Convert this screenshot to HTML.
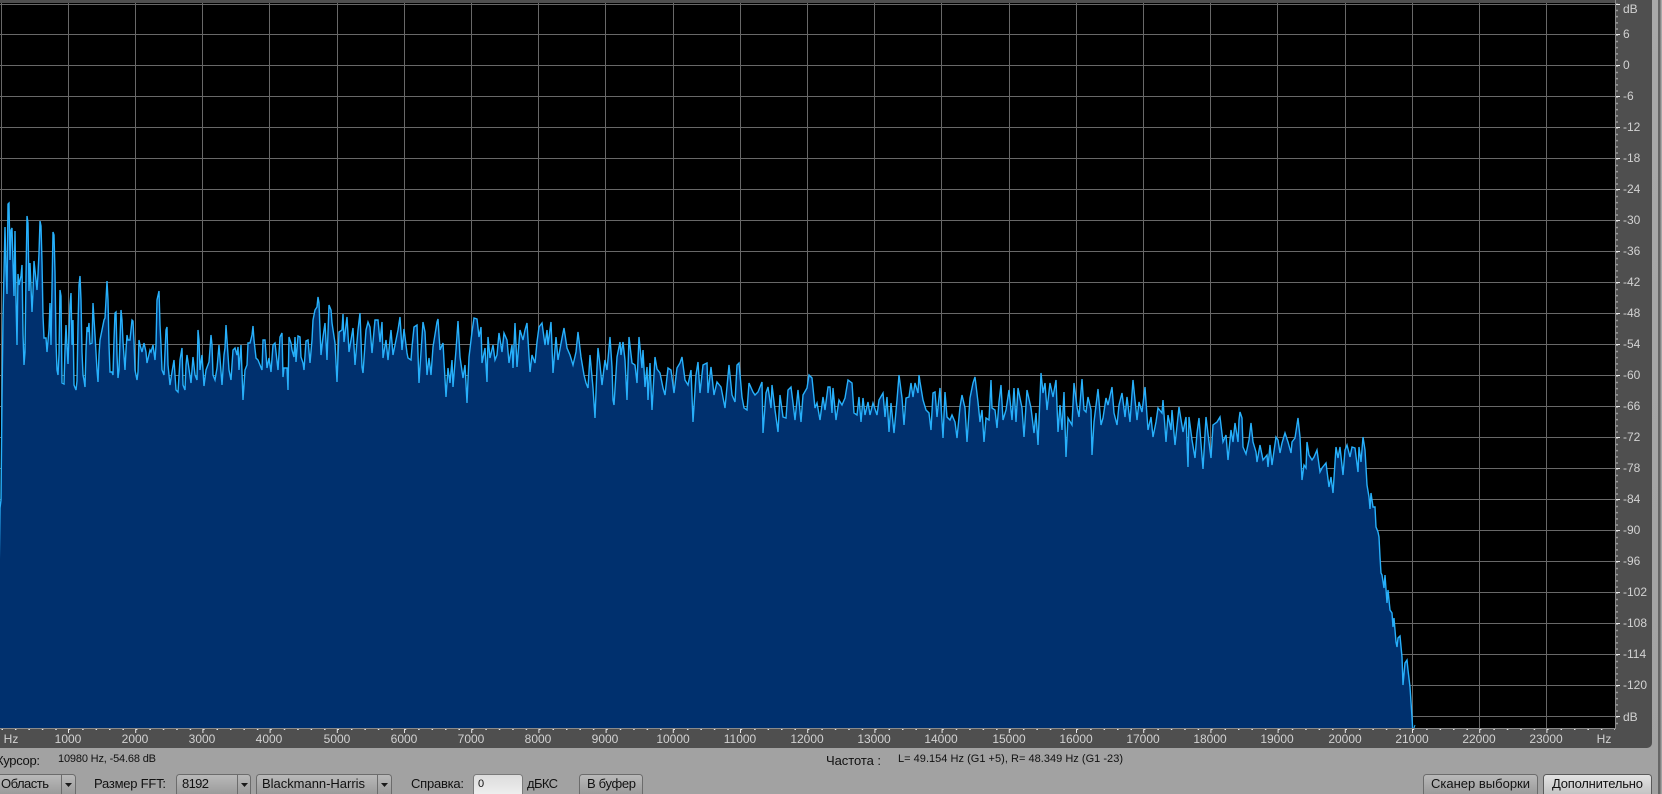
<!DOCTYPE html>
<html lang="ru">
<head>
<meta charset="utf-8">
<title>Спектр</title>
<style>
html,body{margin:0;padding:0;background:#a6a6a6;width:1662px;height:794px;overflow:hidden}
svg{display:block;position:absolute;left:0;top:0}
text{font-family:"Liberation Sans","DejaVu Sans",sans-serif}
.r{fill:#d2d2d2;font-size:12px}
.l{fill:#111;font-size:13px}
.s{fill:#111;font-size:11px}
.b{fill:url(#btn);stroke:#6c6c6c}
.sep{stroke:#6c6c6c}
.arr{fill:#1a1a1a}
</style>
</head>
<body>
<svg width="1662" height="794" viewBox="0 0 1662 794" xmlns="http://www.w3.org/2000/svg">
<defs>
<linearGradient id="bg" x1="0" y1="0" x2="0" y2="1"><stop offset="0" stop-color="#a9a9a9"/><stop offset="1" stop-color="#a2a2a2"/></linearGradient>
<linearGradient id="btn" x1="0" y1="0" x2="0" y2="1"><stop offset="0" stop-color="#bababa"/><stop offset="1" stop-color="#949494"/></linearGradient>
<linearGradient id="btn2" x1="0" y1="0" x2="0" y2="1"><stop offset="0" stop-color="#e4e4e4"/><stop offset="1" stop-color="#bcbcbc"/></linearGradient>
<linearGradient id="inp" x1="0" y1="0" x2="0" y2="1"><stop offset="0" stop-color="#dcdcdc"/><stop offset="1" stop-color="#f2f2f2"/></linearGradient>
</defs>
<rect width="1662" height="794" fill="url(#bg)"/>
<rect x="1658" y="0" width="2.5" height="794" fill="#666"/>
<path d="M0,0H1652V743a5,5 0 0 1-5,5H0Z" fill="#4f4f4f"/>
<rect x="0" y="3" width="1615" height="725" fill="#000"/>
<g stroke="#686868" stroke-width="1" fill="none">
<path d="M0,4.5H1615M0,34.5H1615M0,65.5H1615M0,96.5H1615M0,127.5H1615M0,158.5H1615M0,189.5H1615M0,220.5H1615M0,251.5H1615M0,282.5H1615M0,313.5H1615M0,344.5H1615M0,375.5H1615M0,406.5H1615M0,437.5H1615M0,468.5H1615M0,499.5H1615M0,530.5H1615M0,561.5H1615M0,592.5H1615M0,623.5H1615M0,654.5H1615M0,685.5H1615M0,716.5H1615"/>
<path d="M1.5,3V728M68.5,3V728M135.5,3V728M202.5,3V728M269.5,3V728M337.5,3V728M404.5,3V728M471.5,3V728M538.5,3V728M605.5,3V728M673.5,3V728M740.5,3V728M807.5,3V728M874.5,3V728M941.5,3V728M1009.5,3V728M1076.5,3V728M1143.5,3V728M1210.5,3V728M1277.5,3V728M1345.5,3V728M1412.5,3V728M1479.5,3V728M1546.5,3V728"/>
</g>
<path fill="#00306e" stroke="#27b0fb" stroke-width="1.4" stroke-linejoin="miter" d="M-3,735L-3,728L0,508L1,500L2,399L3,319L4,272L5,227L6,270L7,294L8,204L9,203L10,260L11,230L12,228L13,263L14,296L15,231L16,300L17,345L18,274L19,285L21,276L22,265L23,334L24,365L25,352L26,277L27,216L28,223L29,291L30,263L32,312L33,292L34,261L37,290L38,274L39,253L40,221L41,226L42,262L43,316L44,338L46,338L47,352L49,330L50,303L51,345L53,232L54,235L55,272L56,342L57,370L58,375L59,354L60,290L61,296L62,383L64,384L65,350L66,325L67,346L68,364L70,305L71,293L72,345L73,320L74,385L76,390L77,381L78,325L79,285L80,276L81,300L82,352L83,375L84,380L85,387L86,350L87,327L88,332L89,323L90,344L92,343L93,303L95,335L97,370L98,382L99,355L100,340L104,320L105,318L106,300L107,281L108,300L109,345L110,372L112,372L113,375L114,340L115,313L116,312L117,355L118,378L119,370L120,340L121,310L122,320L123,342L125,370L126,350L127,335L128,340L130,340L132,320L133,321L134,342L135,370L137,380L138,372L139,340L140,345L142,352L144,343L146,352L147,363L150,350L151,352L153,345L155,360L156,345L157,300L159,291L160,325L161,345L162,370L164,375L166,330L167,327L168,365L170,385L172,372L174,360L176,390L178,392L180,360L182,348L183,385L185,390L186,365L187,355L191,383L193,357L195,375L197,380L198,330L199,340L200,370L202,355L204,386L206,370L209,362L211,335L212,345L213,375L215,380L217,368L219,345L222,385L224,355L225,348L226,325L227,340L229,370L231,380L233,350L235,348L237,355L238,347L239,370L241,345L243,400L245,370L247,365L248,343L250,343L252,335L253,326L254,340L256,358L258,360L260,365L262,370L263,340L265,340L267,368L269,358L271,372L273,345L275,343L278,370L280,337L282,333L283,377L284,368L287,368L288,390L289,337L291,343L292,350L294,357L295,337L296,362L298,336L300,337L301,357L303,363L304,370L306,341L308,340L310,363L312,340L313,320L315,310L317,307L318,297L319,303L320,330L321,355L323,337L325,323L327,360L329,305L331,310L332,323L335,343L337,382L339,332L342,330L343,314L344,342L347,317L349,352L353,328L355,365L358,330L360,313L362,367L363,373L366,330L368,322L370,327L372,353L375,320L378,320L380,342L382,322L383,358L386,340L388,360L391,330L393,355L395,345L398,330L400,317L402,350L404,329L407,353L408,358L411,360L412,347L414,327L417,325L419,383L422,337L423,322L425,332L427,375L429,358L431,375L433,347L437,322L438,319L440,350L443,343L446,397L448,368L450,383L452,360L453,387L456,350L458,321L460,357L463,378L465,365L467,403L469,357L472,332L474,318L477,319L479,337L481,327L482,363L485,348L487,382L488,337L490,358L493,345L495,360L497,355L499,333L502,352L504,333L507,340L509,363L512,345L513,368L515,323L517,367L520,330L523,340L525,330L527,323L530,372L532,355L535,363L537,342L539,327L542,323L545,345L547,330L548,345L551,322L553,373L556,337L558,360L562,338L564,328L567,348L570,355L573,365L576,352L578,332L581,357L584,375L586,383L588,388L590,355L593,388L595,418L597,367L598,348L600,365L602,385L605,360L607,370L609,348L610,337L612,367L613,400L614,405L617,357L620,342L621,355L623,342L625,360L627,400L629,337L632,363L635,365L637,383L639,337L642,368L643,350L645,387L647,367L648,400L650,363L652,410L655,357L657,369L660,373L663,388L665,395L668,368L671,370L674,393L677,368L680,363L682,357L685,380L688,385L691,370L693,422L696,375L698,362L700,393L703,365L707,363L708,393L711,367L714,395L717,382L721,387L725,408L729,365L732,395L735,402L737,365L739,363L742,397L744,408L747,410L749,383L753,392L755,395L758,392L762,382L763,433L766,393L768,387L771,408L772,385L775,410L778,432L780,395L783,417L786,418L788,390L791,387L793,403L795,420L798,390L801,422L803,395L807,388L809,375L812,378L815,408L817,403L820,420L823,397L825,410L828,387L830,387L832,413L833,388L836,420L839,400L842,405L845,398L848,380L852,383L854,413L857,415L859,397L861,422L863,398L865,415L868,402L870,415L873,403L877,415L879,400L883,393L885,417L887,397L889,432L891,403L894,433L897,400L899,375L902,398L904,425L906,398L909,397L911,383L913,397L915,383L918,393L919,375L920,382L923,400L926,410L929,413L931,430L933,393L935,392L937,417L940,388L943,438L945,392L947,417L950,420L952,415L955,422L957,438L960,407L962,395L965,408L967,442L970,398L973,383L975,377L978,402L980,422L982,410L984,442L986,418L989,420L991,380L992,408L995,410L997,428L999,402L1001,385L1003,420L1006,410L1009,390L1012,420L1014,388L1016,422L1018,388L1022,408L1024,437L1027,390L1031,408L1034,433L1036,413L1038,445L1041,373L1043,393L1045,383L1047,410L1050,383L1053,397L1056,380L1058,432L1060,405L1062,430L1064,392L1066,457L1068,418L1072,425L1074,383L1077,407L1079,417L1082,379L1084,410L1086,412L1088,397L1091,410L1092,455L1094,422L1098,389L1101,425L1103,418L1106,398L1108,405L1112,387L1114,413L1117,425L1119,405L1122,393L1125,417L1127,397L1130,422L1133,380L1137,420L1139,402L1142,412L1145,387L1148,430L1151,417L1153,437L1156,422L1158,408L1162,413L1163,400L1166,442L1168,415L1171,430L1172,410L1175,445L1179,407L1183,432L1186,417L1188,467L1189,417L1192,440L1195,458L1197,433L1199,418L1203,469L1206,417L1209,442L1211,458L1213,425L1217,422L1220,417L1223,442L1226,435L1228,460L1231,430L1233,442L1235,423L1238,442L1239,420L1240,412L1242,418L1243,447L1246,454L1249,440L1251,423L1253,442L1256,452L1257,462L1260,445L1263,460L1267,455L1268,467L1270,445L1272,465L1276,437L1278,440L1280,453L1282,443L1285,433L1288,442L1291,453L1292,442L1295,438L1298,418L1300,437L1302,480L1304,465L1306,468L1307,442L1309,455L1312,460L1314,457L1317,450L1320,472L1322,468L1326,463L1329,487L1331,477L1333,493L1336,447L1338,458L1340,447L1343,475L1345,450L1347,445L1350,457L1352,447L1355,448L1358,472L1359,447L1361,462L1363,437L1365,450L1367,485L1369,497L1370,509L1371,493L1373,507L1375,507L1376,527L1378,532L1379,537L1380,557L1381,573L1382,575L1384,588L1385,575L1387,603L1388,590L1390,610L1392,613L1393,627L1394,618L1396,642L1397,647L1398,638L1400,636L1402,657L1403,685L1405,663L1407,660L1408,670L1410,687L1411,702L1412,717L1413,735Z"/>
<path d="M1414,728L1415,725" stroke="#27b0fb" fill="none"/>
<rect x="0" y="728" width="1615" height="20" fill="#4f4f4f"/>
<path d="M0,728.5H1615.5M1615.5,0V729" stroke="#8a8a8a" fill="none"/>
<line x1="1.5" y1="729.5" x2="1615" y2="729.5" stroke="#e8e8e8" stroke-width="1" stroke-dasharray="1.5 11.94"/>
<line x1="68" y1="731" x2="1612" y2="731" stroke="#e8e8e8" stroke-width="4" stroke-dasharray="1 66.2"/>
<line x1="1617" y1="3.5" x2="1617" y2="728" stroke="#e8e8e8" stroke-width="1" stroke-dasharray="1.5 4.7"/>
<path d="M1616,4.5h4M1616,34.5h4M1616,65.5h4M1616,96.5h4M1616,127.5h4M1616,158.5h4M1616,189.5h4M1616,220.5h4M1616,251.5h4M1616,282.5h4M1616,313.5h4M1616,344.5h4M1616,375.5h4M1616,406.5h4M1616,437.5h4M1616,468.5h4M1616,499.5h4M1616,530.5h4M1616,561.5h4M1616,592.5h4M1616,623.5h4M1616,654.5h4M1616,685.5h4M1616,716.5h4" stroke="#e8e8e8" fill="none"/>
<g class="r">
<text x="1623" y="13">dB</text><text x="1623" y="38">6</text><text x="1623" y="69">0</text><text x="1623" y="100">-6</text><text x="1623" y="131">-12</text><text x="1623" y="162">-18</text><text x="1623" y="193">-24</text><text x="1623" y="224">-30</text><text x="1623" y="255">-36</text><text x="1623" y="286">-42</text><text x="1623" y="317">-48</text><text x="1623" y="348">-54</text><text x="1623" y="379">-60</text><text x="1623" y="410">-66</text><text x="1623" y="441">-72</text><text x="1623" y="472">-78</text><text x="1623" y="503">-84</text><text x="1623" y="534">-90</text><text x="1623" y="565">-96</text><text x="1623" y="596">-102</text><text x="1623" y="627">-108</text><text x="1623" y="658">-114</text><text x="1623" y="689">-120</text><text x="1623" y="721">dB</text>
</g>
<g class="r" text-anchor="middle">
<text x="11" y="743">Hz</text><text x="68" y="743">1000</text><text x="135" y="743">2000</text><text x="202" y="743">3000</text><text x="269" y="743">4000</text><text x="337" y="743">5000</text><text x="404" y="743">6000</text><text x="471" y="743">7000</text><text x="538" y="743">8000</text><text x="605" y="743">9000</text><text x="673" y="743">10000</text><text x="740" y="743">11000</text><text x="807" y="743">12000</text><text x="874" y="743">13000</text><text x="941" y="743">14000</text><text x="1009" y="743">15000</text><text x="1076" y="743">16000</text><text x="1143" y="743">17000</text><text x="1210" y="743">18000</text><text x="1277" y="743">19000</text><text x="1345" y="743">20000</text><text x="1412" y="743">21000</text><text x="1479" y="743">22000</text><text x="1546" y="743">23000</text><text x="1604" y="743">Hz</text>
</g>
<text class="l" x="-4" y="765" textLength="44">Курсор:</text>
<text class="s" x="58" y="762" textLength="98">10980 Hz, -54.68 dB</text>
<text class="l" x="826" y="765" textLength="55">Частота :</text>
<text class="s" x="898" y="762" textLength="225">L= 49.154 Hz (G1 +5), R= 48.349 Hz (G1 -23)</text>
<!-- controls -->
<rect class="b" x="-6.5" y="774.5" width="82" height="24" rx="3"/><path class="sep" d="M61.5,775V794"/><path class="arr" d="M65,783h7l-3.5,4z"/>
<text class="l" x="1" y="788" textLength="48">Область</text>
<text class="l" x="94" y="788" textLength="72">Размер FFT:</text>
<rect class="b" x="176.5" y="774.5" width="74" height="24" rx="3"/><path class="sep" d="M237.5,775V794"/><path class="arr" d="M241,783h7l-3.5,4z"/>
<text class="l" x="182" y="788" textLength="27">8192</text>
<rect class="b" x="256.5" y="774.5" width="135" height="24" rx="3"/><path class="sep" d="M377.5,775V794"/><path class="arr" d="M381,783h7l-3.5,4z"/>
<text class="l" x="262" y="788" textLength="103">Blackmann-Harris</text>
<text class="l" x="411" y="788" textLength="53">Справка:</text>
<rect x="473.5" y="774.5" width="49" height="24" rx="3" fill="url(#inp)" stroke="#7a7a7a"/>
<text class="s" x="478" y="787">0</text>
<text class="l" x="527" y="788" textLength="31">дБКС</text>
<rect class="b" x="579.5" y="774.5" width="63" height="24" rx="3"/>
<text class="l" x="587" y="788" textLength="49">В буфер</text>
<rect class="b" x="1423.5" y="774.5" width="114" height="24" rx="3"/>
<text class="l" x="1431" y="788" textLength="99">Сканер выборки</text>
<rect x="1543.5" y="774.5" width="108" height="24" rx="3" fill="url(#btn2)" stroke="#5a5a5a"/>
<text class="l" x="1552" y="788" textLength="91">Дополнительно</text>
</svg>
</body>
</html>
